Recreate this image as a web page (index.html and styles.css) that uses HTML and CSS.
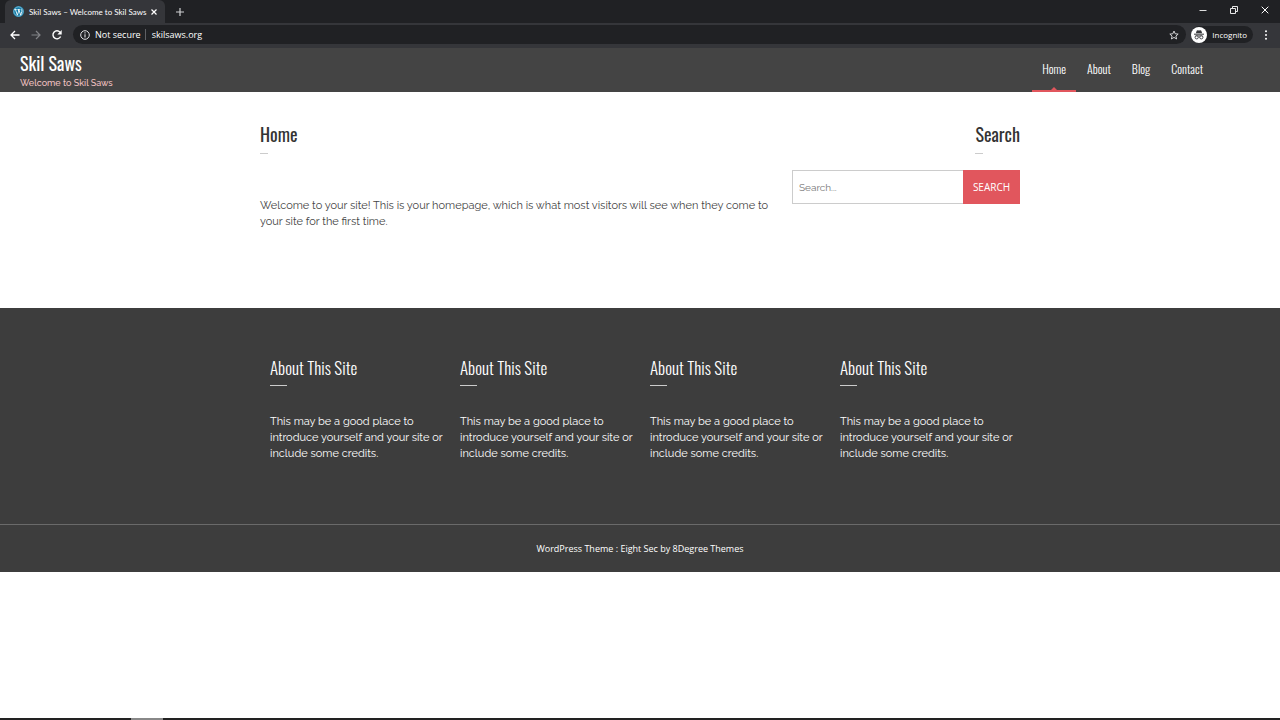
FILE: index.html
```html
<!DOCTYPE html>
<html lang="en">
<head>
  <meta charset="UTF-8">
  <meta name="viewport" content="width=device-width, initial-scale=1.0">
  <title>Skil Saws – Welcome to Skil Saws</title>
  <link rel="stylesheet" href="styles.css">
</head>
<body>

<div class="browser">
  <div class="tab-bar">
    <div class="tab">
      <svg class="favicon" viewBox="0 0 24 24">
        <circle cx="12" cy="12" r="12" fill="#0f7ba8"/>
        <circle cx="12" cy="12" r="10.2" fill="none" stroke="#d9edf5" stroke-width="1.2"/>
        <path d="M3 7.500h5M5.500 8l4 12 3-9-1.200-3.500M10 7.500h5M13 8l3.700 12 2.600-8c.8-2.500-1.800-3-1.500-5.500" fill="none" stroke="#fff" stroke-width="1.900"/>
      </svg>
      <span class="tab-title">Skil Saws – Welcome to Skil Saws</span>
      <button class="icon-button tab-close" aria-label="Close tab">
        <svg width="6" height="6" viewBox="0 0 6 6"><path d="M.5.5l5 5M5.500.5l-5 5" stroke="#fff" stroke-width="1.200"/></svg>
      </button>
    </div>
    <button class="icon-button new-tab" aria-label="New tab">
      <svg width="8" height="8" viewBox="0 0 8 8"><path d="M4 0v8M0 4h8" stroke="#d0d1d3" stroke-width="1.200"/></svg>
    </button>
    <div class="window-buttons">
      <button class="icon-button" aria-label="Minimize">
        <svg width="8" height="8" viewBox="0 0 8 8"><path d="M.5 4.500h7" stroke="#ddd"/></svg>
      </button>
      <button class="icon-button" aria-label="Restore">
        <svg width="8" height="8" viewBox="0 0 8 8"><path d="M.5 2.500h5v5h-5zM2.500 2V.5h5v5H6" fill="none" stroke="#fff" stroke-width=".9"/></svg>
      </button>
      <button class="icon-button" aria-label="Close">
        <svg width="8" height="8" viewBox="0 0 8 8"><path d="M.7.7l6.600 6.600M7.300.7L.7 7.300" stroke="#fff"/></svg>
      </button>
    </div>
  </div>
  <div class="toolbar">
    <button class="icon-button" aria-label="Back">
      <svg width="10" height="10" viewBox="0 0 10 10"><path d="M9.500 5H1M5 1L1 5l4 4" fill="none" stroke="#fff" stroke-width="1.300"/></svg>
    </button>
    <button class="icon-button" aria-label="Forward">
      <svg width="10" height="10" viewBox="0 0 10 10"><path d="M.5 5H9M5 1l4 4-4 4" fill="none" stroke="#828387" stroke-width="1.200"/></svg>
    </button>
    <button class="icon-button" aria-label="Reload">
      <svg width="10" height="10" viewBox="0 0 10 10"><path d="M8.600 6.500A4 4 0 1 1 8 2.200" fill="none" stroke="#fff" stroke-width="1.400"/><path d="M9.700 0v4.400H5.300z" fill="#fff"/></svg>
    </button>
    <div class="address-bar">
      <svg width="10" height="10" viewBox="0 0 10 10"><circle cx="5" cy="5" r="4.300" fill="none" stroke="#e3e3e5"/><path d="M5 4.300v3.200M5 2.300v1.200" stroke="#e3e3e5" stroke-width="1.100"/></svg>
      <span class="security">Not secure</span>
      <span class="url">skilsaws.org</span>
      <svg class="star" width="10" height="10" viewBox="0 0 24 24"><path d="M12 2.500l2.900 6.600 7.100.7-5.400 4.700 1.600 7L12 17.800l-6.200 3.700 1.600-7L2 9.800l7.100-.7z" fill="none" stroke="#e0e0e2" stroke-width="2.200"/></svg>
    </div>
    <div class="incognito">
      <svg width="16" height="16" viewBox="0 0 24 24">
        <circle cx="12" cy="12" r="12" fill="#fff"/>
        <path d="M8.500 5.500l1.200-.8 2.300.6 2.300-.6 1.200.8 1.200 4H7.300z" fill="#36373b"/>
        <path d="M4.500 10.800h15" stroke="#36373b" stroke-width="1.500"/>
        <path d="M6.500 13.500c3-.8 8-.8 11 0" fill="none" stroke="#36373b"/>
        <circle cx="8.500" cy="15.500" r="2.400" fill="none" stroke="#36373b" stroke-width="1.300"/>
        <circle cx="15.500" cy="15.500" r="2.400" fill="none" stroke="#36373b" stroke-width="1.300"/>
        <path d="M10.900 15c.6-.5 1.600-.5 2.200 0" fill="none" stroke="#36373b"/>
      </svg>
      <span>Incognito</span>
    </div>
    <button class="icon-button" aria-label="Menu">
      <svg width="4" height="10" viewBox="0 0 4 10"><g fill="#fff"><circle cx="2" cy="1.300" r="1"/><circle cx="2" cy="5" r="1"/><circle cx="2" cy="8.700" r="1"/></g></svg>
    </button>
  </div>
</div>

<header class="site-header">
  <div class="branding">
    <h1 class="site-title">Skil Saws</h1>
    <p class="site-description">Welcome to Skil Saws</p>
  </div>
  <nav class="main-nav">
    <a class="current" href="#">Home</a>
    <a href="#">About</a>
    <a href="#">Blog</a>
    <a href="#">Contact</a>
  </nav>
</header>

<main class="content container">
  <article class="page">
    <h2 class="page-title">Home</h2>
    <p>Welcome to your site! This is your homepage, which is what most visitors will see when they come to your site for the first time.</p>
  </article>
  <aside class="sidebar">
    <h2 class="page-title">Search</h2>
    <form class="search-form">
      <input type="search" aria-label="Search" placeholder="Search...">
      <button type="submit">SEARCH</button>
    </form>
  </aside>
</main>

<footer class="site-footer">
  <div class="widgets container">
    <section class="widget">
      <h3>About This Site</h3>
      <p>This may be a good place to introduce yourself and your site or include some credits.</p>
    </section>
    <section class="widget">
      <h3>About This Site</h3>
      <p>This may be a good place to introduce yourself and your site or include some credits.</p>
    </section>
    <section class="widget">
      <h3>About This Site</h3>
      <p>This may be a good place to introduce yourself and your site or include some credits.</p>
    </section>
    <section class="widget">
      <h3>About This Site</h3>
      <p>This may be a good place to introduce yourself and your site or include some credits.</p>
    </section>
  </div>
  <div class="site-info">WordPress Theme : <a href="#">Eight Sec</a> by 8Degree Themes</div>
</footer>

<div class="taskbar"><span></span></div>

</body>
</html>
```
FILE: styles.css
```css
* {
  box-sizing: border-box;
}
body {
  margin: 0;
  min-height: 100vh;
  display: flex;
  flex-direction: column;
  background-color: #fff;
  color: #444;
  font-family: Raleway, Lato, sans-serif;
  font-size: 11px;
  line-height: 16px;
}
h1, h2, h3, p {
  margin: 0;
}
a {
  color: inherit;
  text-decoration: none;
}
svg {
  display: block;
  flex: none;
}

/* browser window */
.browser {
  background-color: #35363a;
  color: #fff;
  font-family: "Segoe UI", "Open Sans", sans-serif;
  font-size: 9px;
}
.icon-button {
  display: flex;
  align-items: center;
  justify-content: center;
  padding: 0;
  border: none;
  background: none;
}
.tab-bar {
  display: flex;
  align-items: center;
  height: 23px;
  padding-left: 5px;
  background-color: #202124;
}
.tab {
  display: flex;
  align-items: center;
  width: 160px;
  height: 23px;
  padding: 0 8px;
  border-radius: 6px 6px 0 0;
  background-color: #35363a;
  font-family: "Segoe UI", Lato, sans-serif;
  font-size: 8px;
}
.favicon {
  width: 11px;
  height: 11px;
}
.tab-title {
  margin-left: 5px;
  white-space: nowrap;
}
.tab-close {
  margin-left: auto;
}
.new-tab {
  margin-left: 11px;
}
.window-buttons {
  display: flex;
  gap: 23px;
  margin-left: auto;
  padding: 0 11px 4px 0;
}
.toolbar {
  display: flex;
  align-items: center;
  gap: 11px;
  height: 25px;
  padding: 0 12px 2px 10px;
}
.address-bar {
  flex: 1;
  display: flex;
  align-items: center;
  height: 19px;
  margin-right: -6px;
  padding: 0 7px;
  border-radius: 10px;
  background-color: #202124;
}
.security {
  margin: 0 4px 0 5px;
}
.url {
  padding-left: 6px;
  border-left: 1px solid #5f6064;
  line-height: 11px;
}
.star {
  margin-left: auto;
}
.incognito {
  display: flex;
  align-items: center;
  gap: 5px;
  height: 17px;
  padding-right: 6px;
  border-radius: 9px;
  background-color: #202124;
  font-size: 8px;
}

/* site header */
.site-header {
  display: flex;
  justify-content: space-between;
  height: 44px;
  padding: 0 67px 0 20px;
  background-color: #444;
  color: #fff;
}
.site-title {
  padding-top: 3px;
  font-family: Oswald, sans-serif;
  font-size: 18px;
  font-weight: 400;
  line-height: 24px;
}
.site-description {
  color: #f3c3c3;
  font-size: 9px;
  font-weight: 500;
  line-height: 16px;
}
.main-nav {
  display: flex;
  gap: 1px;
  font-family: Oswald, sans-serif;
  font-size: 12px;
  font-weight: 300;
  line-height: 42px;
}
.main-nav a {
  padding: 0 10px;
}
.main-nav .current {
  position: relative;
  box-shadow: inset 0 -2px #e1565d;
}
.main-nav .current::after {
  content: "";
  position: absolute;
  bottom: 2px;
  left: 50%;
  margin-left: -3px;
  border: 3px solid transparent;
  border-top: none;
  border-bottom-color: #e1565d;
}

/* content */
.container {
  width: 100%;
  max-width: 760px;
  margin: 0 auto;
}
.content {
  display: flex;
  justify-content: space-between;
  padding: 28px 0 78px;
}
.page {
  width: 514px;
}
.page-title {
  width: fit-content;
  color: #333;
  font-family: Oswald, sans-serif;
  font-size: 18px;
  font-weight: 400;
  line-height: 28px;
}
.page-title::after {
  content: "";
  display: block;
  width: 8px;
  margin-top: 5px;
  border-bottom: 1px solid #ccc;
}
.page p {
  margin-top: 44px;
}
.sidebar {
  width: 228px;
}
.sidebar .page-title {
  margin-left: auto;
}
.search-form {
  display: flex;
  height: 34px;
  margin-top: 16px;
}
.search-form input {
  flex: 1;
  min-width: 0;
  padding: 0 6px;
  border: 1px solid #ccc;
  border-right: none;
  font-family: inherit;
  font-size: 10px;
}
.search-form input::placeholder {
  color: #777;
}
.search-form button {
  width: 57px;
  padding: 0;
  border: none;
  background-color: #e1565d;
  color: #fff;
  font-family: "Open Sans", sans-serif;
  font-size: 10px;
}

/* footer */
.site-footer {
  background-color: #3d3d3d;
  color: #fff;
}
.widgets {
  display: grid;
  grid-template-columns: repeat(4, 1fr);
  padding: 45px 0 62px;
}
.widget {
  padding-left: 10px;
}
.widget h3 {
  font-family: Oswald, sans-serif;
  font-size: 17px;
  font-weight: 300;
  line-height: 30px;
}
.widget h3::after {
  content: "";
  display: block;
  width: 17px;
  margin-top: 2px;
  border-bottom: 1px solid #ccc;
}
.widget p {
  margin-top: 28px;
}
.site-info {
  padding: 16px 0 15px;
  border-top: 1px solid #6a6a6a;
  font-family: "Open Sans", sans-serif;
  font-size: 9px;
  text-align: center;
}

/* taskbar edge */
.taskbar {
  height: 2px;
  margin-top: auto;
  padding-left: 131px;
  background-color: #222;
}
.taskbar span {
  display: block;
  width: 32px;
  height: 2px;
  background-color: #888;
}
```
